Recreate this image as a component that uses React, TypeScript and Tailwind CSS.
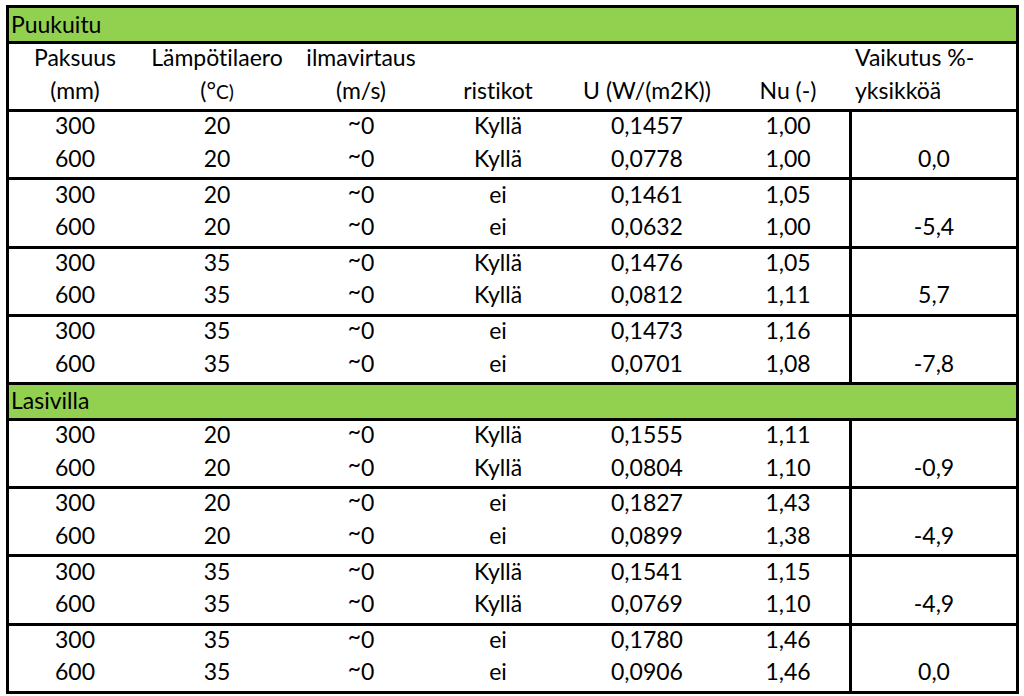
import React from "react";

type Row = [string, string, string, string, string, string];
type Group = { rows: [Row, Row]; v: string };

const puukuitu: Group[] = [
  { rows: [["300", "20", "~0", "Kyllä", "0,1457", "1,00"], ["600", "20", "~0", "Kyllä", "0,0778", "1,00"]], v: "0,0" },
  { rows: [["300", "20", "~0", "ei", "0,1461", "1,05"], ["600", "20", "~0", "ei", "0,0632", "1,00"]], v: "-5,4" },
  { rows: [["300", "35", "~0", "Kyllä", "0,1476", "1,05"], ["600", "35", "~0", "Kyllä", "0,0812", "1,11"]], v: "5,7" },
  { rows: [["300", "35", "~0", "ei", "0,1473", "1,16"], ["600", "35", "~0", "ei", "0,0701", "1,08"]], v: "-7,8" },
];

const lasivilla: Group[] = [
  { rows: [["300", "20", "~0", "Kyllä", "0,1555", "1,11"], ["600", "20", "~0", "Kyllä", "0,0804", "1,10"]], v: "-0,9" },
  { rows: [["300", "20", "~0", "ei", "0,1827", "1,43"], ["600", "20", "~0", "ei", "0,0899", "1,38"]], v: "-4,9" },
  { rows: [["300", "35", "~0", "Kyllä", "0,1541", "1,15"], ["600", "35", "~0", "Kyllä", "0,0769", "1,10"]], v: "-4,9" },
  { rows: [["300", "35", "~0", "ei", "0,1780", "1,46"], ["600", "35", "~0", "ei", "0,0906", "1,46"]], v: "0,0" },
];

const gridCols = "grid grid-cols-[132px_152px_136px_138px_160px_122px_167px]";

function Value({ text }: { text: string }) {
  if (text.startsWith("~")) {
    return (
      <span>
        <span className="relative top-[-4px]">~</span>
        {text.slice(1)}
      </span>
    );
  }
  return <>{text}</>;
}

function Cell({ children }: { children?: React.ReactNode }) {
  return <div className="h-[32.6px] pb-[5px] flex items-center justify-center whitespace-nowrap">{children}</div>;
}

function GroupRows({ g, last }: { g: Group; last: boolean }) {
  return (
    <div className={`${gridCols} grid-rows-[32.6px_32.6px] ${last ? "" : "border-b-[3px] border-black"}`}>
      {g.rows[0].map((c, i) => (
        <div key={`a${i}`} className="h-[32.6px] pb-[5px] flex items-center justify-center whitespace-nowrap" style={{ gridColumn: i + 1, gridRow: 1 }}>
          <Value text={c} />
        </div>
      ))}
      <div className="border-l-[3px] border-black flex flex-col justify-end" style={{ gridColumn: 7, gridRow: "1 / span 2" }}>
        <Cell>{g.v}</Cell>
      </div>
      {g.rows[1].map((c, i) => (
        <div key={`b${i}`} className="h-[32.6px] pb-[5px] flex items-center justify-center whitespace-nowrap" style={{ gridColumn: i + 1, gridRow: 2 }}>
          <Value text={c} />
        </div>
      ))}
    </div>
  );
}

function Title({ text }: { text: string }) {
  return (
    <div className="h-[32px] bg-[#92d050] border-b-[3px] border-black box-content flex items-center pl-[2px] pb-[1px]">
      {text}
    </div>
  );
}

export default function App() {
  return (
    <div
      className="w-[1024px] h-[696px] bg-white pt-[5px] pl-[6px] text-black text-[23px] leading-none [font-variant-ligatures:none]"
      style={{ fontFamily: "Lato, 'Liberation Sans', sans-serif" }}
    >
      <div className="w-[1013px] border-[3px] border-black">
        <Title text="Puukuitu" />
        <div className={`${gridCols} border-b-[3px] border-black`}>
          <Cell>Paksuus</Cell>
          <Cell>Lämpötilaero</Cell>
          <Cell>ilmavirtaus</Cell>
          <Cell />
          <Cell />
          <Cell />
          <div className="h-[32.6px] pb-[5px] flex items-center pl-[6px] whitespace-nowrap">Vaikutus %-</div>
          <Cell>(mm)</Cell>
          <Cell>
            <span>
              (°<span className="text-[19px]">C)</span>
            </span>
          </Cell>
          <Cell>(m/s)</Cell>
          <Cell>ristikot</Cell>
          <Cell>U (W/(m2K))</Cell>
          <Cell>Nu (-)</Cell>
          <div className="h-[32.6px] pb-[5px] flex items-center pl-[6px] whitespace-nowrap">yksikköä</div>
        </div>
        {puukuitu.map((g, i) => (
          <GroupRows key={`p${i}`} g={g} last={false} />
        ))}
        <Title text="Lasivilla" />
        {lasivilla.map((g, i) => (
          <GroupRows key={`l${i}`} g={g} last={i === lasivilla.length - 1} />
        ))}
      </div>
    </div>
  );
}
